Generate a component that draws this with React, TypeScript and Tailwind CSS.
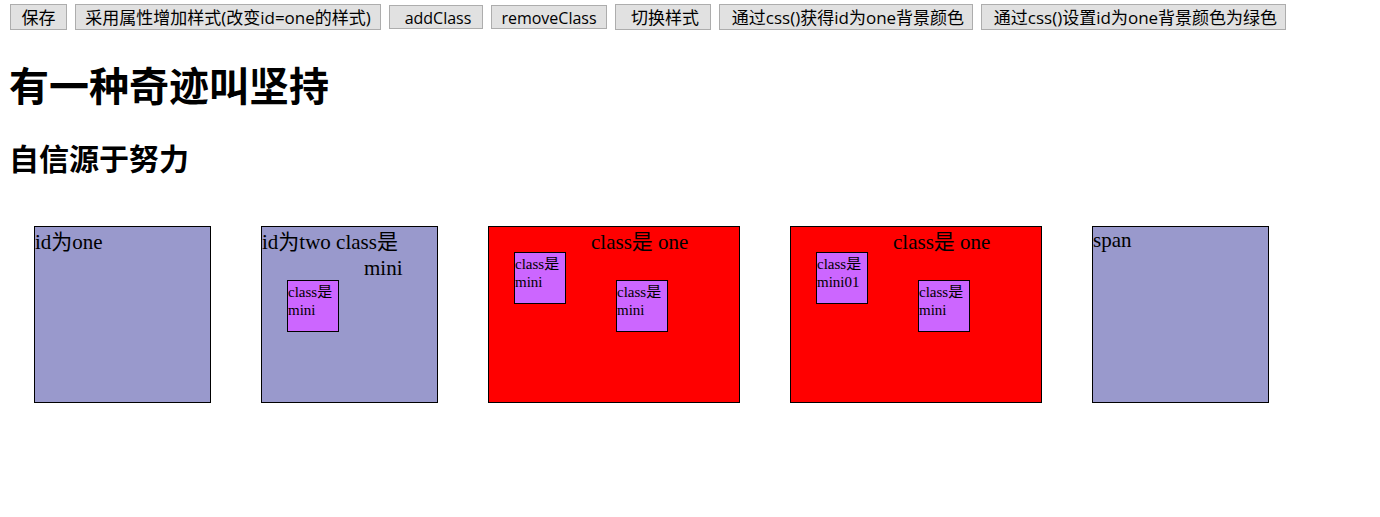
import type { ReactNode } from 'react';

const actions = [
  { label: '保存', className: 'h-[26px] w-[57px] text-[17px]' },
  { label: '采用属性增加样式(改变id=one的样式)', className: 'h-[26px] w-[306px] text-[17px]' },
  { label: 'addClass', className: 'h-6 w-[94px] pl-1 text-[16px]' },
  { label: 'removeClass', className: 'h-6 w-[116px] text-[16px]' },
  { label: '切换样式', className: 'h-[26px] w-[96px] pl-1 text-[17px]' },
  { label: '通过css()获得id为one背景颜色', className: 'h-[26px] w-[254px] pl-1 text-[17px]' },
  { label: '通过css()设置id为one背景颜色为绿色', className: 'h-[26px] w-[305px] pl-1 text-[17px]' },
];

function Mini({ name }: { name: string }) {
  return (
    <div className="float-left m-[25px] size-[52px] border border-black bg-[#cc66ff] pt-[2px] text-[15px] leading-[18px]">
      class是
      <br />
      {name}
    </div>
  );
}

function Box({ className, children }: { className: string; children: ReactNode }) {
  return (
    <div className={`h-[177px] shrink-0 border border-black text-[21px] leading-7 ${className}`}>
      {children}
    </div>
  );
}

export default function App() {
  return (
    <main className="bg-white px-[9px] pt-1 font-['Liberation_Serif','Noto_Sans_CJK_SC',serif] text-black">
      <div className="ml-px flex flex-wrap items-center gap-2">
        {actions.map(({ label, className }) => (
          <button
            key={label}
            type="button"
            className={`flex items-center justify-center whitespace-nowrap border border-[#adadad] bg-[#e1e1e1] pt-[2px] font-['Open_Sans','Noto_Sans_CJK_SC',sans-serif] leading-6 ${className}`}
          >
            {label}
          </button>
        ))}
      </div>
      <h1 className="mt-[30px] text-[40px] font-bold leading-[56px]">有一种奇迹叫坚持</h1>
      <h2 className="mt-6 text-[30px] font-bold leading-[40px]">自信源于努力</h2>
      <div className="flex gap-[50px] px-[25px] pt-[46px]">
        <Box className="w-[177px] bg-[#9999cc]">
          <p className="pt-[2px] leading-[26px]">id为one</p>
        </Box>
        <Box className="w-[177px] bg-[#9999cc]">
          <p className="pt-[2px] leading-[26px]">id为two class是</p>
          <Mini name="mini" />
          <p className="leading-[26px]">mini</p>
        </Box>
        <Box className="w-[252px] bg-[#ff0000]">
          <Mini name="mini" />
          <p className="pt-[2px] leading-[26px]">class是 one</p>
          <Mini name="mini" />
        </Box>
        <Box className="w-[252px] bg-[#ff0000]">
          <Mini name="mini01" />
          <p className="pt-[2px] leading-[26px]">class是 one</p>
          <Mini name="mini" />
        </Box>
        <Box className="w-[177px] bg-[#9999cc]">
          <p className="leading-[26px]">span</p>
        </Box>
      </div>
    </main>
  );
}
